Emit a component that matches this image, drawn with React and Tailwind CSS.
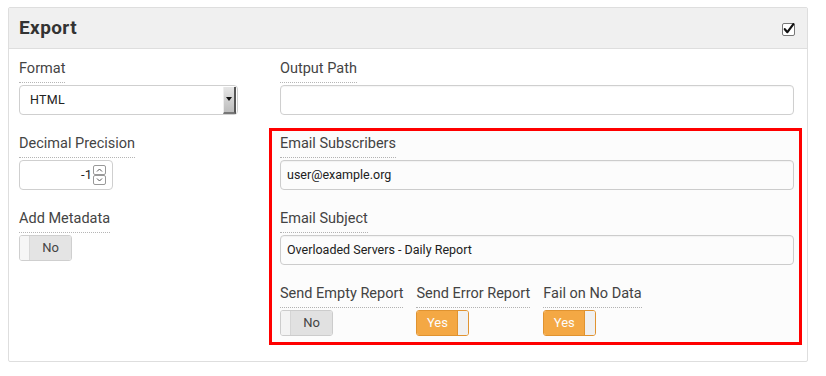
import React from "react";

function Label({ children }) {
  return (
    <div className="h-[24px]">
      <span className="inline-block text-[14.5px] leading-[20px] text-[#444] pb-[3px] border-b border-dotted border-[#b5b5b5]">
        {children}
      </span>
    </div>
  );
}

function Field({ label, children }) {
  return (
    <div className="flex flex-col">
      <Label>{label}</Label>
      <div className="mt-[5px]">{children}</div>
    </div>
  );
}

function TextInput({ value }) {
  return (
    <div className="h-[30px] w-full rounded-[4px] border border-[#cfcfcf] bg-white flex items-center pl-[6px] text-[12.5px] text-[#222] shadow-[inset_0_1px_1px_rgba(0,0,0,0.04)]">
      {value}
    </div>
  );
}

function ToggleNo() {
  return (
    <div className="h-[26px] w-[53px] rounded-[3px] border border-[#cfcfcf] flex overflow-hidden">
      <div className="w-[10px] bg-[#f6f6f6] border-r border-[#d8d8d8]" />
      <div className="flex-1 bg-[#e4e4e4] flex items-center justify-center text-[13px] text-[#444]">No</div>
    </div>
  );
}

function ToggleYes() {
  return (
    <div className="h-[26px] w-[53px] rounded-[3px] border border-[#e39531] flex overflow-hidden">
      <div className="flex-1 bg-[#f7ab45] flex items-center justify-center text-[13px] text-white">Yes</div>
      <div className="w-[11px] bg-[#f3f3f3] border-l border-[#e39531]" />
    </div>
  );
}

export default function App() {
  return (
    <div className="w-[826px] h-[376px] bg-white pt-[7px] pl-[8px] font-[family-name:Roboto,sans-serif]">
      <div className="w-[800px] h-[355px] border border-[#dedede] rounded-[2px] flex flex-col">
        <div className="h-[41px] bg-[#f0f0f0] border-b border-[#dedede] flex items-center justify-between pl-[10px] pr-[11px]">
          <span className="text-[19px] font-bold text-[#333] tracking-[0.4px] pt-[1px]">Export</span>
          <svg width="14" height="14" viewBox="0 0 14 14" className="mt-[1px]">
            <rect x="0.5" y="1.5" width="12" height="12" rx="1.5" fill="#fff" stroke="#777" />
            <path d="M2.8 7.2 L5.4 10.2 L11.4 2.2" fill="none" stroke="#111" strokeWidth="2.2" strokeLinecap="round" strokeLinejoin="round" />
          </svg>
        </div>
        <div className="flex pt-[7px] pl-[10px] pr-[13px]">
          <div className="w-[261px] flex flex-col gap-[16px]">
            <Field label="Format">
              <div className="h-[30px] w-[219px] rounded-[4px] border border-[#cfcfcf] bg-white flex items-center justify-between pl-[10px] pr-[1px] text-[12.5px] text-[#222]">
                <span className="tracking-[0.3px]">HTML</span>
                <div className="h-[27px] w-[13px] bg-gradient-to-b from-[#e6e6e6] to-[#bdbdbd] border-r-2 border-b-2 border-r-[#555] border-b-[#777] border-l border-l-[#eee] flex items-center justify-center">
                  <svg width="6" height="4" viewBox="0 0 6 4"><path d="M0 0 H6 L3 4 Z" fill="#111" /></svg>
                </div>
              </div>
            </Field>
            <Field label="Decimal Precision">
              <div className="h-[30px] w-[94px] rounded-[4px] border border-[#cfcfcf] bg-white flex items-center justify-end pr-[6px] text-[13px] text-[#222]">
                <span className="mr-[1px]">-1</span>
                <div className="flex flex-col w-[13px]">
                  <div className="h-[10px] border border-[#999] rounded-[2px] flex items-center justify-center">
                    <svg width="7" height="4" viewBox="0 0 7 4"><path d="M1 3.5 L3.5 1 L6 3.5" fill="none" stroke="#555" strokeWidth="1" /></svg>
                  </div>
                  <div className="h-[10px] border border-[#999] rounded-[2px] flex items-center justify-center">
                    <svg width="7" height="4" viewBox="0 0 7 4"><path d="M1 0.5 L3.5 3 L6 0.5" fill="none" stroke="#555" strokeWidth="1" /></svg>
                  </div>
                </div>
              </div>
            </Field>
            <Field label="Add Metadata">
              <ToggleNo />
            </Field>
          </div>
          <div className="flex-1 flex flex-col gap-[16px]">
            <Field label="Output Path">
              <TextInput value="" />
            </Field>
            <div className="relative flex flex-col gap-[16px]">
              <Field label="Email Subscribers">
                <TextInput value="user@example.org" />
              </Field>
              <Field label="Email Subject">
                <TextInput value="Overloaded Servers - Daily Report" />
              </Field>
              <div className="flex gap-[13px]">
                <Field label="Send Empty Report">
                  <ToggleNo />
                </Field>
                <Field label="Send Error Report">
                  <ToggleYes />
                </Field>
                <Field label="Fail on No Data">
                  <ToggleYes />
                </Field>
              </div>
              <div className="absolute left-[-11px] right-[-8px] top-[-3px] bottom-[-9px] border-[3px] border-[#ff0000] bg-[rgba(0,0,0,0.012)] pointer-events-none" />
            </div>
          </div>
        </div>
      </div>
    </div>
  );
}
